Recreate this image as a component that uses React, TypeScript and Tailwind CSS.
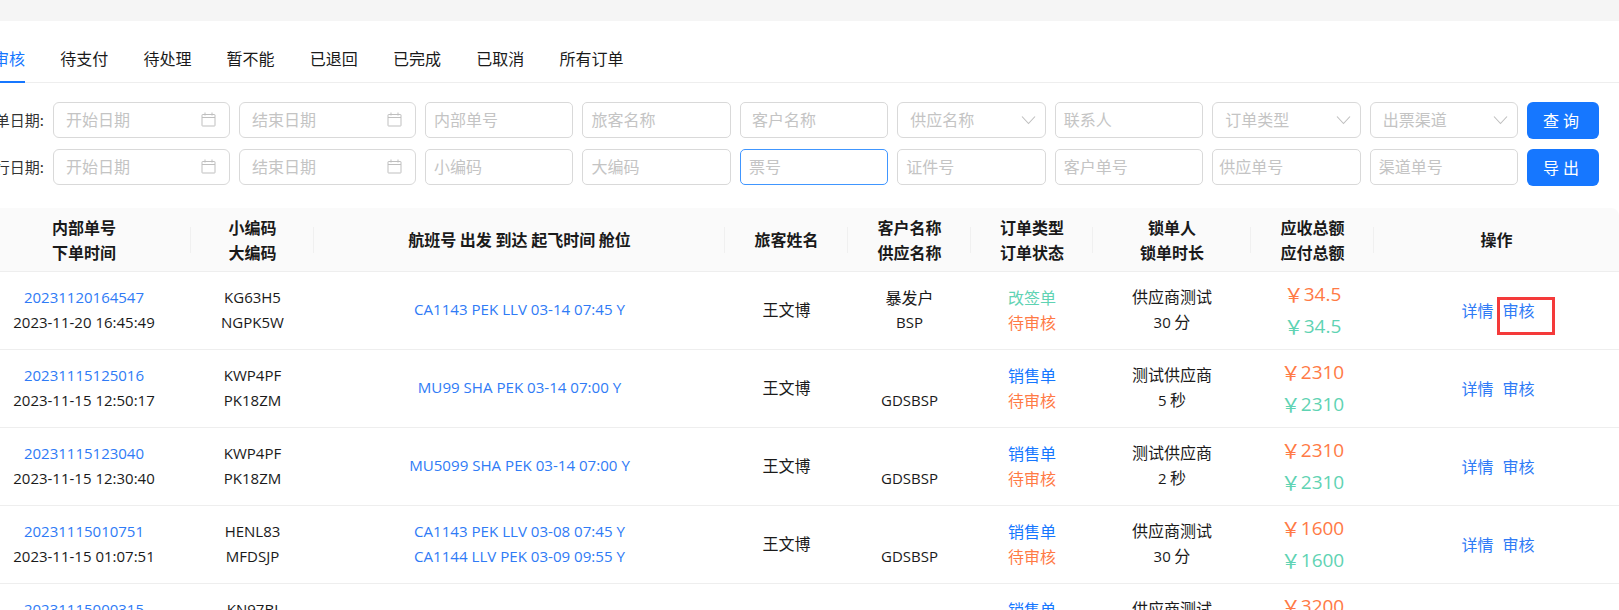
import React from "react";

const CJK = "font-['Noto_Sans_CJK_SC','Open_Sans',sans-serif]";
const LAT = "font-['Open_Sans','Noto_Sans_CJK_SC',sans-serif] text-[15px]";
const COLS = "grid grid-cols-[214px_123px_411px_123px_123px_122px_158px_123px_1fr]";

const tabs = ["待审核", "待支付", "待处理", "暂不能", "已退回", "已完成", "已取消", "所有订单"];

function Calendar() {
  return (
    <svg width="15" height="15" viewBox="0 0 15 15" fill="none" stroke="#bfbfbf" strokeWidth="1" className="-mt-[1px]">
      <rect x="1" y="2.5" width="13" height="11.5" rx="0.5" />
      <path d="M1 5.5h13M4 0.5v3M11 0.5v3" />
    </svg>
  );
}

function Chevron() {
  return (
    <svg width="15" height="10" viewBox="0 0 15 10" fill="none" stroke="#bfbfbf" strokeWidth="1.1" className="-mt-[1px]">
      <path d="M1 1.5l6.5 7 6.5-7" />
    </svg>
  );
}

function DateBox({ text }: { text: string }) {
  return (
    <div className="flex h-[36px] w-[177px] shrink-0 items-center justify-between rounded-[6px] border border-[#d9d9d9] pl-[12px] pr-[13px] text-[16px] text-[#c4c4c4]">
      <span className="-mt-[3px]">{text}</span>
      <Calendar />
    </div>
  );
}

function TextBox({ text, pad = "pl-[8px]", focus = false }: { text: string; pad?: string; focus?: boolean }) {
  return (
    <input
      placeholder={text}
      className={`h-[36px] w-[148.45px] ${pad} shrink-0 rounded-[5px] border pb-[2px] ${focus ? "border-[#4096ff]" : "border-[#d9d9d9]"} text-[16px] outline-none placeholder:text-[#c4c4c4]`}
    />
  );
}

function SelectBox({ text }: { text: string }) {
  return (
    <div className="flex h-[36px] w-[148.45px] shrink-0 items-center justify-between rounded-[6px] border border-[#d9d9d9] pl-[12px] pr-[9px] text-[16px] text-[#c4c4c4]">
      <span className="-mt-[2px]">{text}</span>
      <Chevron />
    </div>
  );
}

function Btn({ text }: { text: string }) {
  return (
    <button className="flex h-[37px] w-[72px] shrink-0 items-center justify-center rounded-[6px] bg-[#1677ff] text-[16px] tracking-[4px] text-white">
      {text}
    </button>
  );
}

type Row = {
  id: string; date: string; small: string; big: string; flights: string[];
  cust: string; sup: string; type: string; typeColor: string;
  lock: string; durN: string; durU: string; amt: string;
};

const rows: Row[] = [
  { id: "20231120164547", date: "2023-11-20 16:45:49", small: "KG63H5", big: "NGPK5W", flights: ["CA1143 PEK LLV 03-14 07:45 Y"], cust: "暴发户", sup: "BSP", type: "改签单", typeColor: "text-[#5fd3b3]", lock: "供应商测试", durN: "30", durU: "分", amt: "34.5" },
  { id: "20231115125016", date: "2023-11-15 12:50:17", small: "KWP4PF", big: "PK18ZM", flights: ["MU99 SHA PEK 03-14 07:00 Y"], cust: "", sup: "GDSBSP", type: "销售单", typeColor: "text-[#1677ff]", lock: "测试供应商", durN: "5", durU: "秒", amt: "2310" },
  { id: "20231115123040", date: "2023-11-15 12:30:40", small: "KWP4PF", big: "PK18ZM", flights: ["MU5099 SHA PEK 03-14 07:00 Y"], cust: "", sup: "GDSBSP", type: "销售单", typeColor: "text-[#1677ff]", lock: "测试供应商", durN: "2", durU: "秒", amt: "2310" },
  { id: "20231115010751", date: "2023-11-15 01:07:51", small: "HENL83", big: "MFDSJP", flights: ["CA1143 PEK LLV 03-08 07:45 Y", "CA1144 LLV PEK 03-09 09:55 Y"], cust: "", sup: "GDSBSP", type: "销售单", typeColor: "text-[#1677ff]", lock: "供应商测试", durN: "30", durU: "分", amt: "1600" },
  { id: "20231115000315", date: "2023-11-15 00:03:15", small: "KN97BJ", big: "PK18ZM", flights: ["CA1143 PEK LLV 03-11 07:45 Y"], cust: "", sup: "GDSBSP", type: "销售单", typeColor: "text-[#1677ff]", lock: "供应商测试", durN: "30", durU: "分", amt: "3200" },
];

function Head({ a, b, sep = true }: { a: string; b?: string; sep?: boolean }) {
  return (
    <div className="relative flex flex-col items-center justify-center text-[16px] leading-[25px] font-semibold text-[#1a1a1a]">
      <span>{a}</span>
      {b && <span>{b}</span>}
      {sep && <span className="absolute right-0 top-[19px] h-[26px] w-px bg-[#f0f0f0]" />}
    </div>
  );
}

function Cell({ children, className = "" }: { children: React.ReactNode; className?: string }) {
  return <div className={`flex flex-col items-center justify-center pb-[2px] leading-[25px] ${className}`}>{children}</div>;
}

function Price({ amt, color }: { amt: string; color: string }) {
  return (
    <div className={`flex h-[32px] items-center text-[20px] ${color}`}>
      <span className={CJK}>￥</span>
      <span className="font-['Open_Sans',sans-serif] text-[19px]">{amt}</span>
    </div>
  );
}

export default function App() {
  return (
    <div className={`h-[610px] w-[1619px] overflow-hidden bg-white ${CJK} text-[#1a1a1a]`}>
      <div className="h-[21px] bg-[#f5f5f5]" />
      <div className="-ml-[23px] w-[1642px]">
        <div className="flex h-[62px] items-end border-b border-[#eeeeee]">
          {tabs.map((t, i) => (
            <div
              key={t}
              className={`relative -mb-px mr-[35.2px] flex h-[44px] items-center border-b-2 pb-[4px] text-[16px] ${i === 0 ? "border-[#1677ff] text-[#1677ff]" : "border-transparent"}`}
            >
              {t}
            </div>
          ))}
        </div>

        <div className="flex flex-col gap-[11px] pt-[19px]">
          <div className="flex h-[36px] items-center gap-[9px]">
            <span className="w-[67px] shrink-0 whitespace-nowrap text-right text-[15px] text-[#333]">下单日期:</span>
            <DateBox text="开始日期" />
            <DateBox text="结束日期" />
            <TextBox text="内部单号" />
            <TextBox text="旅客名称" />
            <TextBox text="客户名称" pad="pl-[11px]" />
            <SelectBox text="供应名称" />
            <TextBox text="联系人" />
            <SelectBox text="订单类型" />
            <SelectBox text="出票渠道" />
            <Btn text="查询" />
          </div>
          <div className="flex h-[36px] items-center gap-[9px]">
            <span className="w-[67px] shrink-0 whitespace-nowrap text-right text-[15px] text-[#333]">飞行日期:</span>
            <DateBox text="开始日期" />
            <DateBox text="结束日期" />
            <TextBox text="小编码" />
            <TextBox text="大编码" />
            <TextBox text="票号" focus />
            <TextBox text="证件号" />
            <TextBox text="客户单号" />
            <TextBox text="供应单号" pad="pl-[6px]" />
            <TextBox text="渠道单号" />
            <Btn text="导出" />
          </div>
        </div>

        <div className={`mt-[23px] h-[64px] rounded-t-[8px] border-b border-[#eeeeee] bg-[#fafafa] ${COLS}`}>
          <Head a="内部单号" b="下单时间" />
          <Head a="小编码" b="大编码" />
          <Head a="航班号 出发 到达 起飞时间 舱位" />
          <Head a="旅客姓名" />
          <Head a="客户名称" b="供应名称" />
          <Head a="订单类型" b="订单状态" />
          <Head a="锁单人" b="锁单时长" />
          <Head a="应收总额" b="应付总额" />
          <Head a="操作" sep={false} />
        </div>

        {rows.map((r, i) => (
          <div key={r.id} className={`h-[78px] border-b border-[#eeeeee] ${COLS}`}>
            <Cell className={LAT}>
              <span className="text-[#2f7bf6]">{r.id}</span>
              <span>{r.date}</span>
            </Cell>
            <Cell className={LAT}>
              <span>{r.small}</span>
              <span>{r.big}</span>
            </Cell>
            <Cell className={`${LAT} text-[#2f7bf6]`}>
              {r.flights.map((f) => (
                <span key={f} className="text-[15.1px]">{f}</span>
              ))}
            </Cell>
            <Cell className="text-[16px]">王文博</Cell>
            <Cell>
              <span className="h-[25px] text-[16px]">{r.cust}</span>
              <span className={LAT}>{r.sup}</span>
            </Cell>
            <Cell className="text-[16px]">
              <span className={r.typeColor}>{r.type}</span>
              <span className="text-[#ff7a45]">待审核</span>
            </Cell>
            <Cell className="text-[16px]">
              <span>{r.lock}</span>
              <span>
                <span className={LAT}>{r.durN}</span> {r.durU}
              </span>
            </Cell>
            <div className="flex flex-col items-center justify-center">
              <Price amt={r.amt} color="text-[#ff7a45]" />
              <Price amt={r.amt} color="text-[#5fd3b3]" />
            </div>
            <div className="relative flex items-center justify-center gap-[9px] pb-[2px] pl-[3px] text-[16px] text-[#2f7bf6]">
              <span>详情</span>
              <span>审核</span>
              {i === 0 && (
                <span className="absolute left-[123px] top-[25px] h-[38px] w-[58px] border-[3px] border-[#f43a3a]" />
              )}
            </div>
          </div>
        ))}
      </div>
    </div>
  );
}
